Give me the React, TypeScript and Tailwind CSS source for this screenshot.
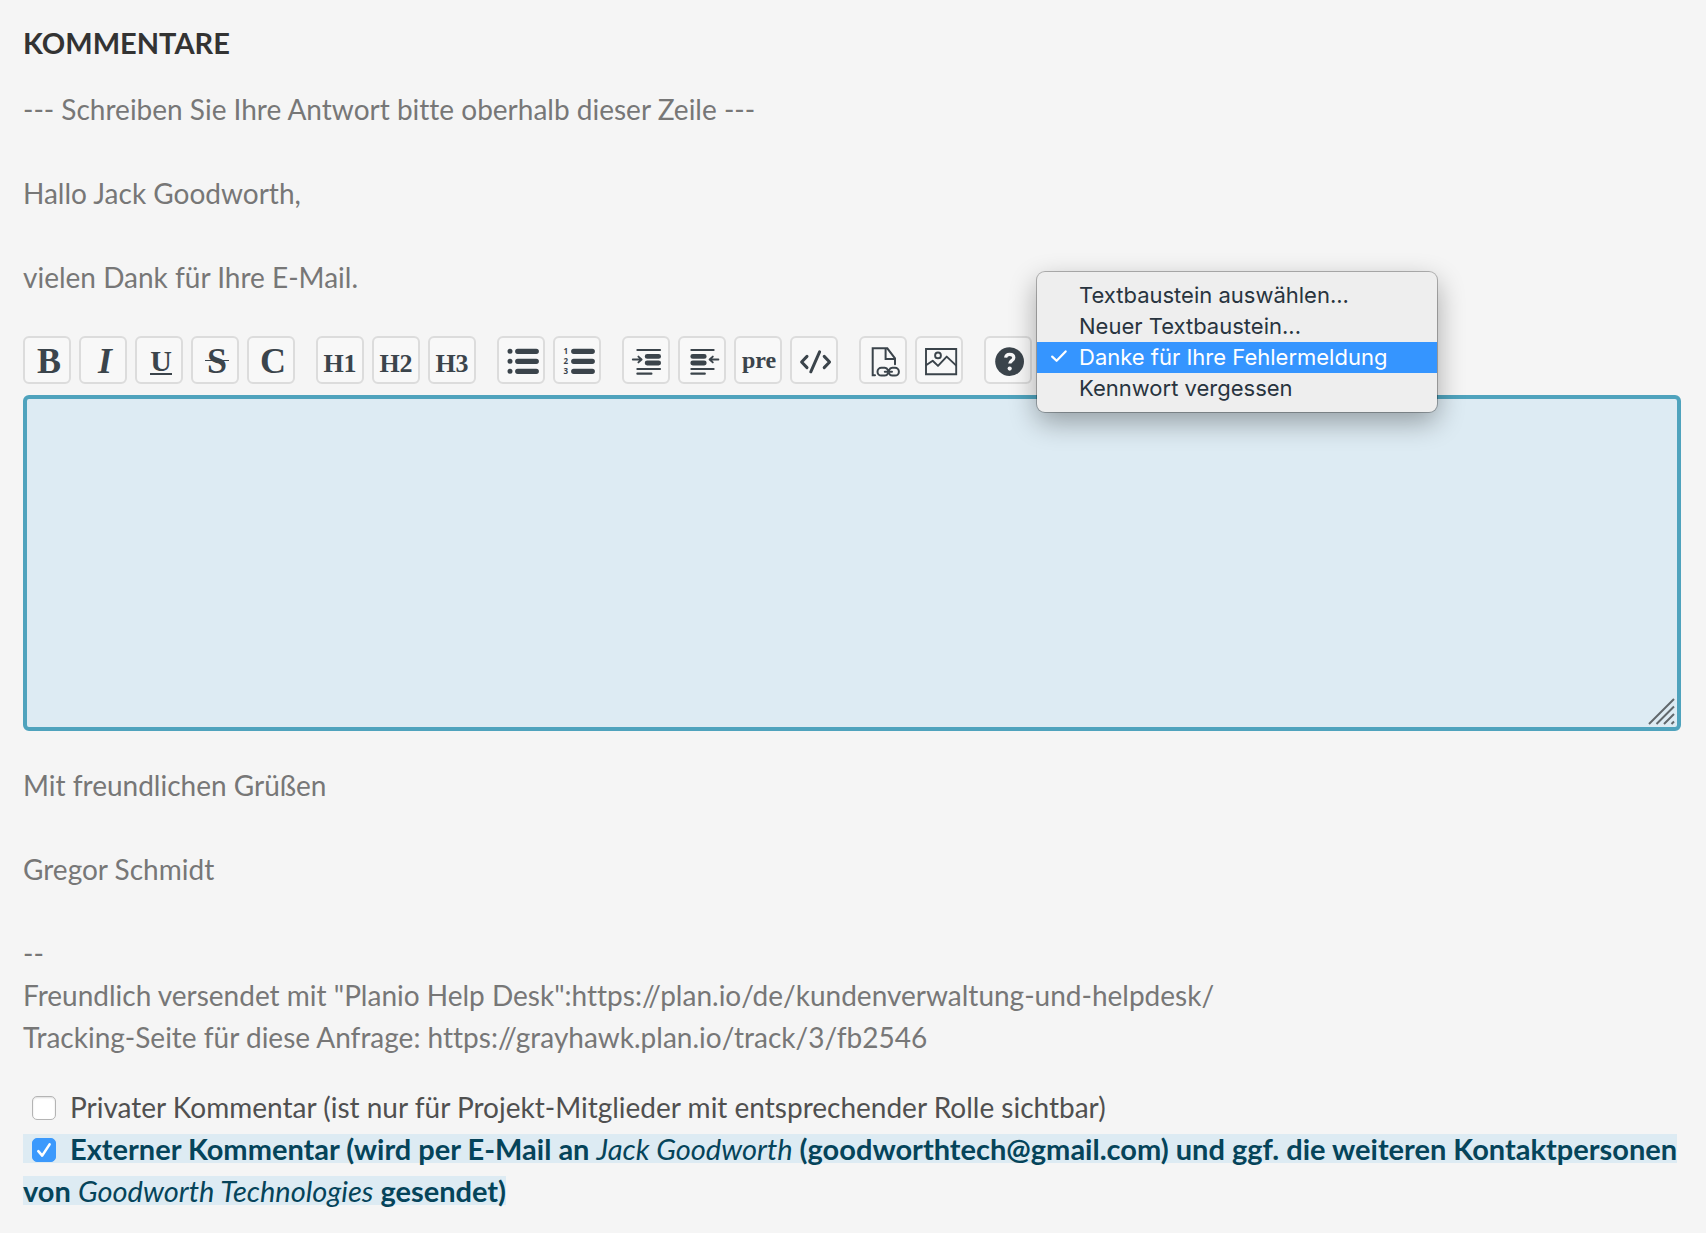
import { ReactNode, useState } from "react";

type ToolButtonProps = {
  title: string;
  children: ReactNode;
};

type CheckboxProps = {
  id: string;
  checked: boolean;
  onChange: (checked: boolean) => void;
};

const snippets = [
  "Textbaustein auswählen...",
  "Neuer Textbaustein...",
  "Danke für Ihre Fehlermeldung",
  "Kennwort vergessen",
];

const ToolButton = ({ title, children }: ToolButtonProps) => (
  <button
    type="button"
    aria-label={title}
    className="flex size-12 items-center justify-center rounded-md border-2 border-[#dcdcdc] bg-[#f8f8f8] font-['Liberation_Serif',serif] text-[#3b444b] hover:bg-white"
  >
    {children}
  </button>
);

const ToolGroup = ({ children }: { children: ReactNode }) => (
  <div className="flex gap-2">{children}</div>
);

const Icon = ({ children }: { children: ReactNode }) => (
  <svg
    viewBox="0 0 48 48"
    className="size-12 shrink-0"
    fill="none"
    stroke="currentColor"
    strokeWidth="2.2"
    strokeLinecap="round"
    strokeLinejoin="round"
    aria-hidden="true"
  >
    {children}
  </svg>
);

const Checkbox = ({ id, checked, onChange }: CheckboxProps) => (
  <span className="relative mr-[14px] ml-[9px] inline-block size-6 align-[-2px]">
    <input
      id={id}
      type="checkbox"
      checked={checked}
      onChange={(e) => onChange(e.target.checked)}
      className="block size-6 appearance-none rounded-[5px] border border-[#b4b4b4] bg-white shadow-[inset_0_1px_2px_#0002] checked:border-[#3b99fc] checked:bg-[#3b99fc] checked:shadow-none"
    />
    {checked && (
      <svg
        viewBox="0 0 24 24"
        className="pointer-events-none absolute inset-0 size-6"
        fill="none"
        stroke="#fff"
        strokeWidth="2.6"
        strokeLinecap="round"
        strokeLinejoin="round"
        aria-hidden="true"
      >
        <path d="M6.300 13.200 10.200 17.600 17.600 6.400" />
      </svg>
    )}
  </span>
);

const App = () => {
  const [comment, setComment] = useState("");
  const [snippet, setSnippet] = useState(snippets[2]);
  const [isPrivate, setIsPrivate] = useState(false);
  const [isExternal, setIsExternal] = useState(true);

  return (
    <main className="min-h-screen bg-[#f5f5f5] pt-[23px] pr-[25px] pb-5 pl-[23px] font-[Lato,sans-serif] text-[28px] leading-[42px] text-[#777] [font-variant-ligatures:none]">
      <h1 className="text-[29px] leading-10 font-bold text-[#333] uppercase">
        Kommentare
      </h1>

      {/* text above the answer */}
      <div className="mt-[25px] flex flex-col gap-[42px]">
        <p>--- Schreiben Sie Ihre Antwort bitte oberhalb dieser Zeile ---</p>
        <p>Hallo Jack Goodworth,</p>
        <p>vielen Dank für Ihre E-Mail.</p>
      </div>

      {/* toolbar */}
      <div className="mt-[38px] flex gap-[21px]">
        <ToolGroup>
          <ToolButton title="Fett">
            <b className="pt-[2px] pl-1 text-[36px] leading-none">B</b>
          </ToolButton>
          <ToolButton title="Kursiv">
            <b className="pt-[2px] pl-1 text-[36px] leading-none italic">I</b>
          </ToolButton>
          <ToolButton title="Unterstrichen">
            <b className="mt-1 ml-1 border-b-2 text-[30px] leading-6">U</b>
          </ToolButton>
          <ToolButton title="Durchgestrichen">
            <b className="relative ml-1 pt-[2px] text-[36px] leading-none">
              S
              <span className="absolute inset-x-[-2px] top-1/2 h-px bg-[#3b444b]" />
            </b>
          </ToolButton>
          <ToolButton title="Code">
            <b className="pt-[2px] pl-1 text-[36px] leading-none">C</b>
          </ToolButton>
        </ToolGroup>

        <ToolGroup>
          <ToolButton title="Überschrift 1">
            <b className="pt-2 text-[26px] leading-none">H1</b>
          </ToolButton>
          <ToolButton title="Überschrift 2">
            <b className="pt-2 text-[26px] leading-none">H2</b>
          </ToolButton>
          <ToolButton title="Überschrift 3">
            <b className="pt-2 text-[26px] leading-none">H3</b>
          </ToolButton>
        </ToolGroup>

        <ToolGroup>
          <ToolButton title="Aufzählungsliste">
            <Icon>
              <path d="M13 15.3h.01M13 25.3h.01M13 35.3h.01" strokeWidth="5" />
              <path d="M20.7 15.3h18.6M20.7 25.3h18.6M20.7 35.3h18.6" strokeWidth="5.2" />
            </Icon>
          </ToolButton>
          <ToolButton title="Nummerierte Liste">
            <Icon>
              <path d="M20.7 15.3h18.6M20.7 25.3h18.6M20.7 35.3h18.6" strokeWidth="5.2" />
              <g
                fill="currentColor"
                stroke="none"
                className="font-['Open_Sans',sans-serif] text-[8px] font-bold"
              >
                <text x="10.5" y="18">1</text>
                <text x="10.5" y="28">2</text>
                <text x="10.5" y="38">3</text>
              </g>
            </Icon>
          </ToolButton>
        </ToolGroup>

        <ToolGroup>
          <ToolButton title="Zitat einfügen">
            <Icon>
              <path d="M15.4 14h22.6M15.4 33h22.6M15.4 37.7h14" />
              <path d="M25.2 20.4h11.4M25.2 27h11.4" strokeWidth="4.9" />
              <path d="M10.8 23.5h8.6M16.4 20.6l3.2 2.9-3.2 2.9" strokeWidth="1.9" />
            </Icon>
          </ToolButton>
          <ToolButton title="Zitat entfernen">
            <Icon>
              <path d="M13.4 14h22.2M13.4 33h22.2M13.4 37.7h13.4" />
              <path d="M14.8 20.4h11.4M14.8 27h11.4" strokeWidth="4.9" />
              <path d="M40.4 23.5h-8.6M34.8 20.6l-3.2 2.9 3.2 2.9" strokeWidth="1.9" />
            </Icon>
          </ToolButton>
          <ToolButton title="Vorformatierter Text">
            <b className="pl-[2px] text-[24px] leading-none font-bold">pre</b>
          </ToolButton>
          <ToolButton title="Quelltext">
            <Icon>
              <path
                d="M17 20.4 11.6 26 17 31.6M29.6 15.8l-8.8 20M34.2 20.4l5.4 5.6-5.4 5.6"
                strokeWidth="3"
              />
            </Icon>
          </ToolButton>
        </ToolGroup>

        <ToolGroup>
          <ToolButton title="Wiki-Link">
            <Icon>
              <path
                d="M16 39.3h-2.3v-27h14.6L36 22.3v6M26.6 12.6V23H36"
                strokeWidth="2"
                strokeLinejoin="miter"
              />
              <path
                d="M28.8 33.8a3.4 3.4 0 0 0-3-2h-3.4a3.9 3.9 0 0 0 0 7.8h3.4a3.4 3.4 0 0 0 3-2M30.2 33.8a3.4 3.4 0 0 1 3-2h2.8a3.9 3.9 0 0 1 0 7.8h-2.8a3.4 3.4 0 0 1-3-2M25.8 35.7h7.2"
                strokeWidth="2"
              />
            </Icon>
          </ToolButton>
          <ToolButton title="Bild">
            <Icon>
              <path d="M11 13h30.2v25.2H11z" strokeWidth="1.9" strokeLinejoin="miter" />
              <circle cx="23" cy="19.4" r="2.9" strokeWidth="1.9" />
              <path d="m11.4 29 6.3-4.3 5.3 5.2 8.7-9.3L41 29.4" strokeWidth="1.9" />
            </Icon>
          </ToolButton>
        </ToolGroup>

        <ToolGroup>
          <ToolButton title="Hilfe">
            <Icon>
              <circle cx="25.6" cy="25.6" r="14.4" fill="currentColor" stroke="none" />
              <path
                d="M21.6 21.6c.3-2.2 1.8-3.3 4-3.3 2.5 0 4.2 1.3 4.2 3.4 0 2.9-4 3-4 5.8"
                stroke="#f8f8f8"
                strokeWidth="3.2"
                strokeLinecap="butt"
              />
              <circle cx="25.7" cy="32.6" r="2.1" fill="#f8f8f8" stroke="none" />
            </Icon>
          </ToolButton>
        </ToolGroup>

        {/* snippet picker with its menu open */}
        <div className="relative -ml-4 w-[400px]">
          <select
            aria-label="Textbaustein"
            value={snippet}
            onChange={(e) => setSnippet(e.target.value)}
            className="block h-12 w-full appearance-none rounded-md border-2 border-[#4fa3bd] bg-white px-10 text-[22px] text-[#333]"
          >
            {snippets.map((item) => (
              <option key={item}>{item}</option>
            ))}
          </select>
          <ul
            role="listbox"
            aria-label="Textbausteine"
            className="absolute -top-16 left-0 z-10 w-full rounded-lg bg-[#eee] py-2 font-[Inter,sans-serif] text-[22px] leading-[31px] text-[#28343e] shadow-[0_0_0_1px_#0004,0_10px_28px_#0005]"
          >
            {snippets.map((item) => (
              <li
                key={item}
                role="option"
                aria-selected={item === snippet}
                onClick={() => setSnippet(item)}
                className="relative pl-[42px] whitespace-nowrap aria-selected:bg-[#3595ff] aria-selected:text-white"
              >
                {item === snippet && (
                  <svg
                    viewBox="0 0 16 12"
                    className="absolute top-2 left-[14px] h-3 w-4"
                    fill="none"
                    stroke="currentColor"
                    strokeWidth="2.2"
                    strokeLinecap="round"
                    strokeLinejoin="round"
                    aria-hidden="true"
                  >
                    <path d="M1.2 6.6 5.6 10.8 14.6 1.4" />
                  </svg>
                )}
                {item}
              </li>
            ))}
          </ul>
        </div>
      </div>

      {/* answer */}
      <div className="relative mt-[11px]">
        <textarea
          aria-label="Kommentar"
          value={comment}
          onChange={(e) => setComment(e.target.value)}
          className="block h-[336px] w-full resize-none rounded-md border-4 border-[#4fa3bd] bg-[#ddebf3] p-3 text-[#333] outline-none"
        />
        <svg
          viewBox="0 0 28 28"
          className="pointer-events-none absolute right-[5px] bottom-[5px] size-7"
          fill="none"
          stroke="#61686c"
          strokeWidth="2"
          aria-hidden="true"
        >
          <path d="M1 26 26 1M8.500 26 26 8.500M16 26 26 16M23.500 26 26 23.500" />
        </svg>
      </div>

      {/* text below the answer */}
      <div className="mt-[33px] flex flex-col gap-[42px]">
        <p>Mit freundlichen Grüßen</p>
        <p>Gregor Schmidt</p>
        <p>
          --
          <br />
          Freundlich versendet mit "Planio Help
          Desk":https://plan.io/de/kundenverwaltung-und-helpdesk/
          <br />
          Tracking-Seite für diese Anfrage: https://grayhawk.plan.io/track/3/fb2546
        </p>
      </div>

      {/* options */}
      <div className="mt-7 text-[#505050]">
        <div>
          <Checkbox id="private" checked={isPrivate} onChange={setIsPrivate} />
          <label htmlFor="private">
            Privater Kommentar (ist nur für Projekt-Mitglieder mit entsprechender
            Rolle sichtbar)
          </label>
        </div>
        <div className="text-[29px] font-bold text-[#05445a]">
          <span className="bg-[linear-gradient(#ddebf3,#ddebf3)] bg-[length:100%_29px] bg-center bg-no-repeat box-decoration-clone">
            <Checkbox id="external" checked={isExternal} onChange={setIsExternal} />
            <label htmlFor="external">
              Externer Kommentar (wird per E-Mail an{" "}
              <em className="font-normal">Jack Goodworth</em>{" "}
              (goodworthtech@gmail.com) und ggf. die weiteren Kontaktpersonen von{" "}
              <em className="font-normal">Goodworth Technologies</em> gesendet)
            </label>
          </span>
        </div>
      </div>
    </main>
  );
};

export default App;
